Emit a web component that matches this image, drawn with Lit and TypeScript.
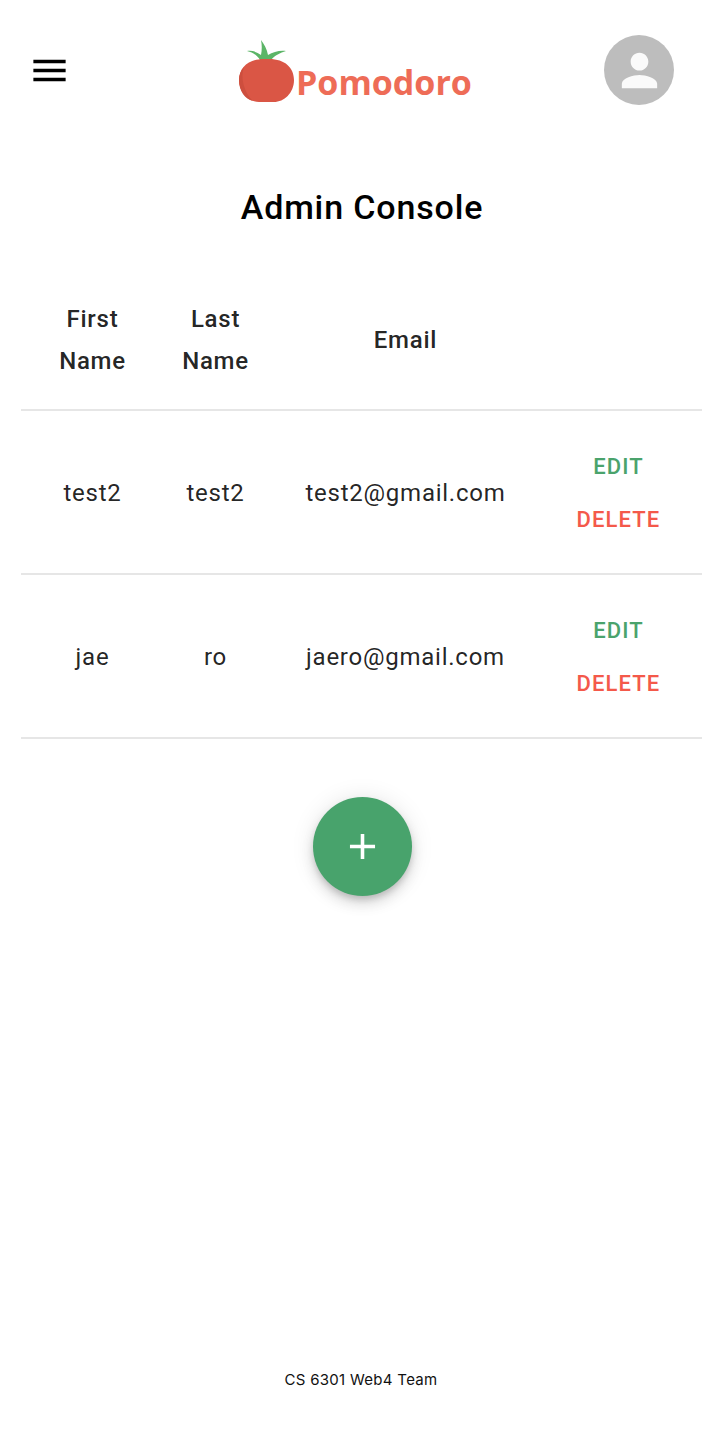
import { LitElement, html, css } from "lit";
import { customElement } from "lit/decorators.js";

interface User { first: string; last: string; email: string; }

const USERS: User[] = [
  { first: "test2", last: "test2", email: "test2@gmail.com" },
  { first: "jae", last: "ro", email: "jaero@gmail.com" },
];

@customElement("app-root")
export class AppRoot extends LitElement {
  static styles = css`
    :host {
      display: flex;
      flex-direction: column;
      min-height: 1448px;
      background: #fff;
      font-family: Roboto, sans-serif;
      color: rgba(0, 0, 0, 0.87);
    }
    .header {
      display: flex;
      align-items: flex-start;
      height: 140px;
      padding: 35px 48px 0 28px;
      box-sizing: border-box;
    }
    .menu { width: 43px; height: 43px; margin-top: 14px; display: block; }
    .logo { display: flex; align-items: flex-start; margin-left: 167px; margin-top: 5px; }
    .logo svg { display: block; width: 58px; height: 64px; }
    .logo span {
      font-family: "Open Sans", sans-serif;
      font-size: 34px;
      font-weight: 700;
      line-height: 40px;
      color: #ee6c57;
      margin-top: 22px;
    }
    .avatar {
      width: 70px;
      height: 70px;
      border-radius: 50%;
      background: #bdbdbd;
      margin-left: auto;
      display: flex;
      align-items: center;
      justify-content: center;
    }
    .avatar svg { width: 53px; height: 53px; fill: #fafafa; }
    h1 {
      margin: 45px 0 0;
      padding-left: 2px;
      font-size: 34px;
      font-weight: 460;
      line-height: 44px;
      letter-spacing: 0.85px;
      text-align: center;
      color: #000;
    }
    table {
      width: 681px;
      margin: 38px 0 0 21px;
      border-collapse: collapse;
      table-layout: fixed;
    }
    th, td {
      text-align: center;
      border-bottom: 2px solid #e6e6e6;
      letter-spacing: 0.75px;
    }
    th { height: 138px; padding: 4px 16px 0 17px; font-size: 24px; font-weight: 460; line-height: 42px; }
    td { height: 160px; padding: 2px 0 0 1px; font-size: 24px; font-weight: 400; }
    .actions {
      display: flex;
      flex-direction: column;
      align-items: center;
      gap: 17px;
      padding: 1px 9px 0 0;
    }
    .action {
      font-size: 22px;
      font-weight: 460;
      line-height: 36px;
      letter-spacing: 1.1px;
    }
    .edit { color: #4aa36c; }
    .delete { color: #f4594a; }
    .fab-row { display: flex; justify-content: center; margin-top: 58px; padding-left: 2px; }
    .fab {
      width: 99px;
      height: 99px;
      border-radius: 50%;
      background: #48a36c;
      display: flex;
      align-items: center;
      justify-content: center;
      box-shadow: 0 4px 6px -1px rgba(0, 0, 0, 0.16), 0 8px 13px 0 rgba(0, 0, 0, 0.11), 0 1px 23px 0 rgba(0, 0, 0, 0.1);
    }
    .fab svg { width: 43px; height: 43px; fill: #fff; }
    .footer {
      margin-top: auto;
      height: 138px;
      padding-top: 59px;
      box-sizing: border-box;
      text-align: center;
      font-family: Inter, sans-serif;
      font-size: 15px;
      line-height: 22px;
      letter-spacing: 0.3px;
      color: #111;
    }
  `;

  private tomato() {
    return html`<svg viewBox="0 0 58 64">
      <path d="M23 0 C26 4 29 9 30 15 C35 12 42 10 48 11 C42 13 37 15 33 20 L22 20 C19 15 14 12 9 11 C14 10 19 12 23 15 C24 10 24 5 23 0 Z" fill="#5cb567"/>
      <path d="M28.5 19 C46 18 56 27 56 40 C56 53 46 62 36 62 C32 62 25 62 21 62 C10 62 1 52 1 40 C1 27 12 18 28.5 19 Z" fill="#da5645"/>
      <path d="M6 27 C2 37 6 53 15 61 C7 59 1 51 1 40 C1 35 3 30 6 27 Z" fill="#cd4e3e"/>
    </svg>`;
  }

  render() {
    return html`
      <div class="header">
        <svg class="menu" viewBox="0 0 24 24"><path d="M3 18h18v-2H3v2zm0-5h18v-2H3v2zm0-7v2h18V6H3z"/></svg>
        <div class="logo">${this.tomato()}<span>Pomodoro</span></div>
        <div class="avatar">
          <svg viewBox="0 0 24 24"><path d="M12 12c2.21 0 4-1.79 4-4s-1.79-4-4-4-4 1.79-4 4 1.79 4 4 4zm0 2c-2.67 0-8 1.34-8 4v2h16v-2c0-2.66-5.33-4-8-4z"/></svg>
        </div>
      </div>
      <h1>Admin Console</h1>
      <table>
        <colgroup>
          <col style="width:142px" /><col style="width:104px" /><col style="width:276px" /><col />
        </colgroup>
        <thead>
          <tr><th>First Name</th><th>Last Name</th><th>Email</th><th></th></tr>
        </thead>
        <tbody>
          ${USERS.map((u) => html`
            <tr>
              <td>${u.first}</td>
              <td>${u.last}</td>
              <td>${u.email}</td>
              <td>
                <div class="actions">
                  <span class="action edit">EDIT</span>
                  <span class="action delete">DELETE</span>
                </div>
              </td>
            </tr>
          `)}
        </tbody>
      </table>
      <div class="fab-row">
        <div class="fab"><svg viewBox="0 0 24 24"><path d="M19 13h-6v6h-2v-6H5v-2h6V5h2v6h6v2z"/></svg></div>
      </div>
      <div class="footer">CS 6301 Web4 Team</div>
    `;
  }
}
